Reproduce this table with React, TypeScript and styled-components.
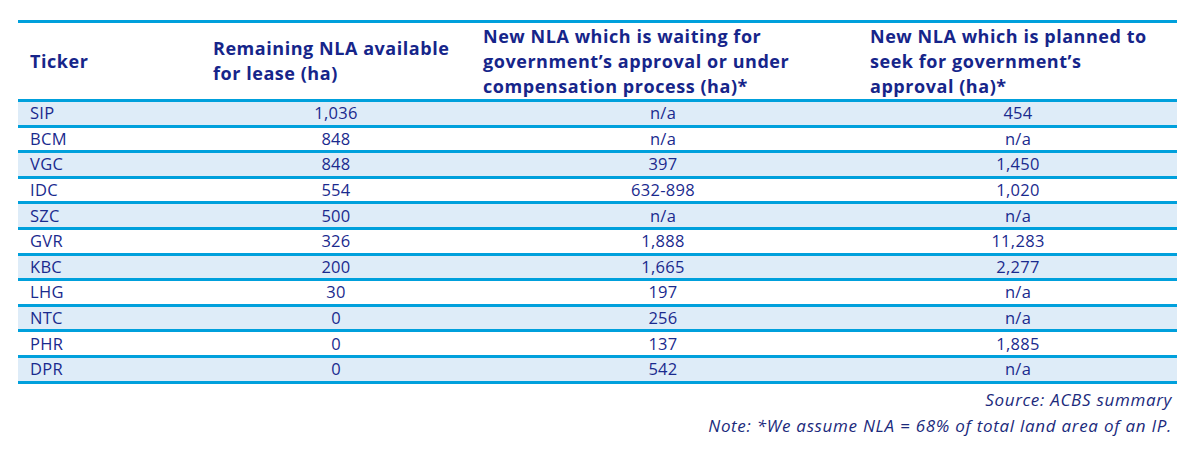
import React from 'react';
import styled, { createGlobalStyle } from 'styled-components';

const GlobalStyle = createGlobalStyle`
  html, body {
    margin: 0;
    padding: 0;
    background: #ffffff;
  }
  body {
    font-family: 'Open Sans', 'Liberation Sans', sans-serif;
  }
`;

const Page = styled.div`
  width: 1189px;
  height: 453px;
  padding: 20px 12px 0 18px;
  box-sizing: border-box;
  color: #1b2a8c;
`;

const Table = styled.div`
  width: 1159px;
  border-top: 3px solid #00a0dc;
`;

const Row = styled.div<{ $shaded?: boolean; $head?: boolean }>`
  display: grid;
  grid-template-columns: 187px 262px 392px 318px;
  align-items: center;
  height: ${p => (p.$head ? '76px' : '22.6px')};
  background: ${p => (p.$shaded ? '#deecf8' : '#ffffff')};
  border-bottom: 3px solid #00a0dc;
`;

const HeadCell = styled.div<{ $pad: number }>`
  padding-left: ${p => p.$pad}px;
  font-size: 18px;
  font-weight: 700;
  line-height: 25px;
  color: #16258a;
  white-space: nowrap;
  letter-spacing: 0.55px;
`;

const Cell = styled.div<{ $left?: boolean }>`
  padding-left: ${p => (p.$left ? '12px' : '0')};
  text-align: ${p => (p.$left ? 'left' : 'center')};
  font-size: 16.5px;
  line-height: 20px;
  color: #1a2a8e;
  letter-spacing: 0.3px;
`;

const Notes = styled.div`
  width: 1154px;
  padding-top: 3px;
  display: flex;
  flex-direction: column;
  align-items: flex-end;
`;

const NoteLine = styled.div`
  font-style: italic;
  font-size: 17px;
  line-height: 26px;
  color: #1b2a7c;
  letter-spacing: 0.65px;
  word-spacing: 0.3px;
  white-space: nowrap;
`;

const rows: [string, string, string, string][] = [
  ['SIP', '1,036', 'n/a', '454'],
  ['BCM', '848', 'n/a', 'n/a'],
  ['VGC', '848', '397', '1,450'],
  ['IDC', '554', '632-898', '1,020'],
  ['SZC', '500', 'n/a', 'n/a'],
  ['GVR', '326', '1,888', '11,283'],
  ['KBC', '200', '1,665', '2,277'],
  ['LHG', '30', '197', 'n/a'],
  ['NTC', '0', '256', 'n/a'],
  ['PHR', '0', '137', '1,885'],
  ['DPR', '0', '542', 'n/a'],
];

const App: React.FC = () => {
  return (
    <Page>
      <GlobalStyle />
      <Table>
        <Row $head>
          <HeadCell $pad={12}>Ticker</HeadCell>
          <HeadCell $pad={8}>
            Remaining NLA available
            <br />
            for lease (ha)
          </HeadCell>
          <HeadCell $pad={16}>
            New NLA which is waiting for
            <br />
            government’s approval or under
            <br />
            compensation process (ha)*
          </HeadCell>
          <HeadCell $pad={11}>
            New NLA which is planned to
            <br />
            seek for government’s
            <br />
            approval (ha)*
          </HeadCell>
        </Row>
        {rows.map((r, i) => (
          <Row key={r[0]} $shaded={i % 2 === 0}>
            <Cell $left>{r[0]}</Cell>
            <Cell>{r[1]}</Cell>
            <Cell>{r[2]}</Cell>
            <Cell>{r[3]}</Cell>
          </Row>
        ))}
      </Table>
      <Notes>
        <NoteLine>Source: ACBS summary</NoteLine>
        <NoteLine>Note: *We assume NLA = 68% of total land area of an IP.</NoteLine>
      </Notes>
    </Page>
  );
};

export default App;
